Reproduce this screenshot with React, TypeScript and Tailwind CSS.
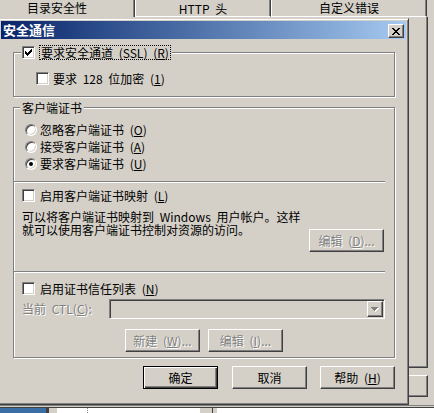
import React from "react";

// win2000 bevels
const raised =
  "border border-t-white border-l-white border-r-[#404040] border-b-[#404040] shadow-[inset_-1px_-1px_0_#808080]";
const sunken =
  "border border-t-[#808080] border-l-[#808080] border-r-white border-b-white shadow-[inset_1px_1px_0_#404040,inset_-1px_-1px_0_#d4d0c8]";
const etched = "border border-[#808080] shadow-[inset_1px_1px_0_#fff,1px_1px_0_#fff]";
const dim = "text-[#808080] [text-shadow:1px_1px_0_#fff]";

const CheckMark = () => (
  <svg width="7" height="7" viewBox="0 0 7 7" shapeRendering="crispEdges">
    <rect x="6" y="0" width="1" height="1" />
    <rect x="5" y="1" width="2" height="1" />
    <rect x="0" y="2" width="1" height="1" />
    <rect x="4" y="2" width="3" height="1" />
    <rect x="0" y="3" width="2" height="1" />
    <rect x="3" y="3" width="3" height="1" />
    <rect x="0" y="4" width="5" height="1" />
    <rect x="1" y="5" width="3" height="1" />
    <rect x="2" y="6" width="1" height="1" />
  </svg>
);

const CloseGlyph = () => (
  <svg width="8" height="7" viewBox="0 0 8 7" shapeRendering="crispEdges">
    <rect x="0" y="0" width="2" height="1" />
    <rect x="6" y="0" width="2" height="1" />
    <rect x="1" y="1" width="2" height="1" />
    <rect x="5" y="1" width="2" height="1" />
    <rect x="2" y="2" width="4" height="1" />
    <rect x="3" y="3" width="2" height="1" />
    <rect x="2" y="4" width="4" height="1" />
    <rect x="1" y="5" width="2" height="1" />
    <rect x="5" y="5" width="2" height="1" />
    <rect x="0" y="6" width="2" height="1" />
    <rect x="6" y="6" width="2" height="1" />
  </svg>
);

const Check = ({ checked = false }: { checked?: boolean }) => (
  <span className={`w-[13px] h-[13px] shrink-0 bg-white flex items-center justify-center ${sunken}`}>
    {checked && <CheckMark />}
  </span>
);

const Radio = ({ checked = false }: { checked?: boolean }) => (
  <span className="w-[12px] h-[12px] shrink-0 rounded-full bg-white border border-t-[#808080] border-l-[#808080] border-r-white border-b-white shadow-[inset_1px_1px_0_#404040,inset_-1px_-1px_0_#d4d0c8] flex items-center justify-center">
    {checked && <span className="w-[4px] h-[4px] rounded-full bg-black" />}
  </span>
);

const Btn = ({
  children,
  isDefault = false,
  disabled = false,
  className = "",
}: {
  children: React.ReactNode;
  isDefault?: boolean;
  disabled?: boolean;
  className?: string;
}) => (
  <div
    className={`w-[75px] h-[23px] shrink-0 flex items-center justify-center leading-[14px] ${
      isDefault
        ? "border border-black shadow-[inset_1px_1px_0_#fff,inset_-1px_-1px_0_#404040,inset_-2px_-2px_0_#808080]"
        : raised
    } ${disabled ? dim : "text-black"} ${className}`}
  >
    {children}
  </div>
);

export default function App() {
  return (
    <div className='relative w-[434px] h-[413px] overflow-hidden bg-[#d4d0c8] text-[12px] text-black [word-spacing:3px] font-["Noto_Sans_CJK_SC","Noto_Sans",sans-serif] flex flex-col'>
      {/* property sheet underneath */}
      <div className="flex h-[17px] shrink-0 leading-[14px]">
        <div className="w-[135px] h-full pl-[27px] pt-[1px] border-r border-r-[#404040] shadow-[inset_-1px_0_0_#808080]">
          目录安全性
        </div>
        <div className="w-[136px] h-full flex justify-center pt-[2px] border-l border-l-white border-r border-r-[#404040] border-b border-b-white shadow-[inset_-1px_0_0_#808080]">
          HTTP 头
        </div>
        <div className="w-[156px] h-full flex justify-center pt-[1px] border-l border-l-white border-r border-r-[#404040] border-b border-b-white shadow-[inset_-1px_0_0_#808080]">
          自定义错误
        </div>
      </div>
      <div className="w-[428px] h-[351px] shrink-0 border-r border-b border-r-[#404040] border-b-[#404040] shadow-[inset_-1px_-1px_0_#808080]" />
      <div className="h-[37px] shrink-0 flex justify-end pr-[6px] pt-[7px]">
        <div className={`w-[75px] h-[22px] ${raised}`} />
      </div>
      <div className="h-[3px] shrink-0 border-t border-b border-t-[#808080] border-b-[#404040]" />
      <div className="flex-1 flex">
        <div className="w-[46px] bg-[#3a6ea5]" />
        <div className="w-[3px] bg-[#404040]" />
        <div className="w-[8px] bg-[#d4d0c8]" />
        <div className="w-[31px] bg-white border-r border-dotted border-r-[#808080]" />
        <div className="w-[112px] bg-white" />
        <div className="w-[13px] bg-[#d4d0c8] border-r border-r-[#404040]" />
        <div className="w-[4px] bg-[#d4d0c8]" />
        <div className="flex-1 bg-white" />
      </div>

      {/* 安全通信 dialog window */}
      <div className="absolute left-[-2px] top-[18px] w-[411px] h-[387px] p-[2px] bg-[#d4d0c8] border border-t-[#d4d0c8] border-l-[#d4d0c8] border-r-[#404040] border-b-[#404040] shadow-[inset_1px_1px_0_#fff,inset_-1px_-1px_0_#808080] flex flex-col">
        <div className="h-[18px] shrink-0 flex items-start bg-linear-to-r from-[#0a246a] to-[#a6caf0]">
          <span className="pl-[2px] pt-[1px] text-[13px] leading-[16px] font-bold text-white">安全通信</span>
          <div className={`ml-auto mr-[2px] mt-[3px] w-[16px] h-[14px] bg-[#d4d0c8] flex items-center justify-center ${raised}`}>
            <CloseGlyph />
          </div>
        </div>

        <fieldset className={`mt-[6px] ml-[12px] w-[382px] ${etched}`}>
          <legend className="ml-[7px] px-[1px] bg-[#d4d0c8]">
            <div className="h-[15px] flex items-center">
              <Check checked />
              <span className="ml-[4px] h-[15px] px-[1px] leading-[13px] border border-dotted border-black whitespace-nowrap">
                要求安全通道 (SSL) (<u>R</u>)
              </span>
            </div>
          </legend>
          <div className="mt-[11px] mb-[10px] ml-[22px] h-[15px] flex items-center gap-[4px] leading-[14px]">
            <Check />
            <span>
              要求 128 位加密 (<u>1</u>)
            </span>
          </div>
        </fieldset>

        <fieldset className={`mt-[3px] ml-[12px] w-[382px] ${etched}`}>
          <legend className="ml-[6px] px-[2px] h-[15px] leading-[15px] bg-[#d4d0c8]">客户端证书</legend>
          <div className="mt-[6px] flex flex-col leading-[14px]">
            {[
              { t: "忽略客户端证书", k: "O", on: false },
              { t: "接受客户端证书", k: "A", on: false },
              { t: "要求客户端证书", k: "U", on: true },
            ].map((r) => (
              <div key={r.k} className="h-[17px] ml-[11px] flex items-center gap-[3px]">
                <Radio checked={r.on} />
                <span>
                  {r.t} (<u>{r.k}</u>)
                </span>
              </div>
            ))}
          </div>

          <div className="mt-[9px] mr-[9px] h-[2px] border-t border-b border-t-[#808080] border-b-white" />

          <div className="mt-[5px] ml-[8px] h-[15px] flex items-center gap-[5px] leading-[14px]">
            <Check />
            <span>
              启用客户端证书映射 (<u>L</u>)
            </span>
          </div>

          <div className="mt-[7px] flex items-start">
            <p className="ml-[8px] leading-[13px] whitespace-nowrap">
              可以将客户端证书映射到 Windows 用户帐户。这样
              <br />
              就可以使用客户端证书控制对资源的访问。
            </p>
            <Btn disabled className="ml-auto mr-[10px] mt-[19px]">
              编辑 (<u>D</u>)...
            </Btn>
          </div>

          <div className="mt-[19px] mr-[9px] h-[2px] border-t border-b border-t-[#808080] border-b-white" />

          <div className="mt-[8px] ml-[8px] h-[15px] flex items-center gap-[5px] leading-[14px]">
            <Check />
            <span>
              启用证书信任列表 (<u>N</u>)
            </span>
          </div>

          <div className="mt-[3px] ml-[8px] h-[20px] flex items-center">
            <span className={`w-[87px] leading-[14px] ${dim}`}>
              当前 CTL(<u>C</u>):
            </span>
            <div className={`w-[276px] h-[20px] flex items-center justify-end pr-[1px] ${sunken}`}>
              <div className={`w-[16px] h-[16px] flex items-center justify-center ${raised}`}>
                <svg width="8" height="5" viewBox="0 0 8 5" shapeRendering="crispEdges">
                  <path d="M1 1h7l-3.5 4z" fill="#fff" />
                  <path d="M0 0h7l-3.5 4z" fill="#808080" />
                </svg>
              </div>
            </div>
          </div>

          <div className="mt-[10px] mb-[5px] ml-[111px] flex gap-[8px]">
            <Btn disabled>
              新建 (<u>W</u>)...
            </Btn>
            <Btn disabled>
              编辑 (<u>I</u>)...
            </Btn>
          </div>
        </fieldset>

        <div className="mt-[8px] ml-[142px] flex">
          <Btn isDefault>确定</Btn>
          <Btn className="ml-[14px]">取消</Btn>
          <Btn className="ml-[13px]">
            帮助 (<u>H</u>)
          </Btn>
        </div>
      </div>
    </div>
  );
}
